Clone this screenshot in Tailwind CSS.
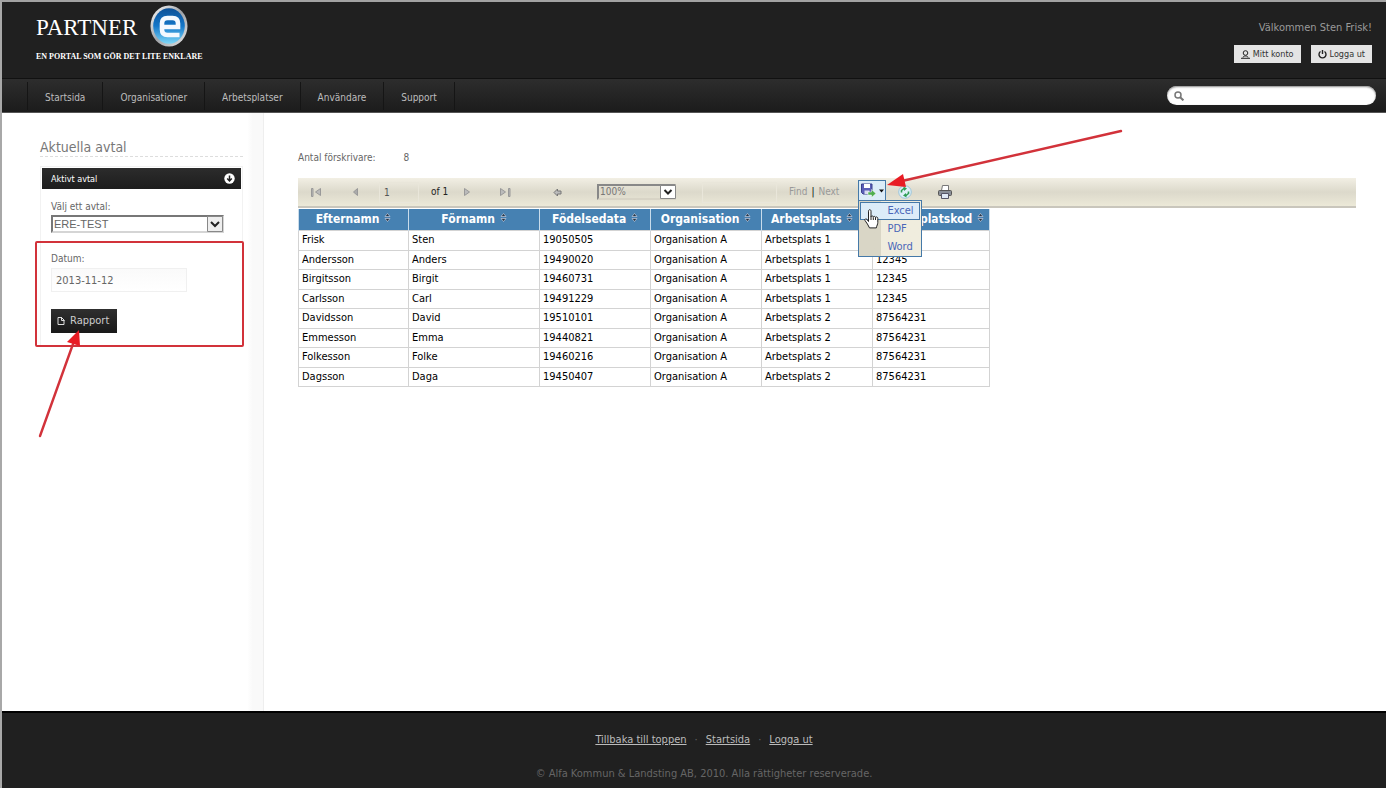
<!DOCTYPE html>
<html lang="sv">
<head>
<meta charset="utf-8">
<meta name="viewport" content="width=device-width, initial-scale=1">
<title>Partner e</title>
<script src="https://cdn.jsdelivr.net/npm/@tailwindcss/browser@4"></script>
</head>
<body class="relative flex min-h-screen flex-col border-t-2 border-l-2 border-t-[#a2a2a2] border-l-[#a8a8a8] bg-white font-['DejaVu_Sans_Condensed','DejaVu_Sans',sans-serif] text-[11px] leading-4 text-[#666]">

<header class="flex h-[76px] justify-between bg-[#202020] pr-[14px] pl-[34px]">
  <a href="#" class="block text-white">
    <span class="flex h-[47px] items-center gap-3">
      <span class="pt-1 font-['Liberation_Serif',serif] text-[23px] leading-7">PARTNER</span>
      <svg class="h-[44px] w-[40px]" viewBox="0 0 40 44" aria-label="e">
        <defs>
          <linearGradient id="ring" x1="0" y1="0" x2="1" y2="1"><stop offset="0" stop-color="#fff"/><stop offset=".5" stop-color="#9fa3a8"/><stop offset="1" stop-color="#e8e8e8"/></linearGradient>
          <linearGradient id="ball" x1="0" y1="0" x2="0" y2="1"><stop offset="0" stop-color="#0b4f96"/><stop offset=".5" stop-color="#1477c9"/><stop offset="1" stop-color="#7fd8f8"/></linearGradient>
        </defs>
        <ellipse cx="20" cy="22" rx="18.500" ry="20.500" fill="url(#ring)"/>
        <ellipse cx="20" cy="22" rx="15.800" ry="17.800" fill="url(#ball)"/>
        <path d="M30.500 31H18.500q-5.500 0-5.500-5.500V19.500q0-5.500 5.500-5.500h5q5.500 0 5.500 5.500v3.500H13" fill="none" stroke="#f4f9ff" stroke-width="4.600"/>
      </svg>
    </span>
    <span class="block font-['Liberation_Serif',serif] text-[8px] leading-4 font-bold">EN PORTAL SOM GÖR DET LITE ENKLARE</span>
  </a>
  <div class="flex flex-col items-end pt-[18px]">
    <p class="text-[#9a9a9a]">Välkommen Sten Frisk!</p>
    <div class="mt-[9px] flex gap-[10px] text-[9px] text-[#333]">
      <button type="button" class="flex h-[18px] items-center gap-[3px] bg-[#e4e4e4] px-[7px]">
        <svg class="h-[9px] w-[9px]" viewBox="0 0 9 9" fill="none" stroke="#222"><circle cx="4.500" cy="3" r="2.300"/><path d="M0 8.300h9M2 7.500c0-2 5-2 5 0"/></svg>
        Mitt konto</button>
      <button type="button" class="flex h-[18px] items-center gap-[3px] bg-[#e4e4e4] px-[7px]">
        <svg class="h-[9px] w-[9px]" viewBox="0 0 9 9" fill="none" stroke="#222" stroke-width="1.400"><path d="M2.500 1.500a3.500 3.500 0 1 0 4 0M4.500 0v4"/></svg>
        Logga ut</button>
    </div>
  </div>
</header>

<nav class="flex h-[35px] items-center justify-between border-t border-b border-t-[#111] border-b-[#555] bg-linear-to-b from-[#2d2d2d] to-[#1c1c1c] pr-[10px] pl-[25px] text-[10px] text-[#bdbdbd]">
  <ul class="flex h-7 divide-x divide-[#151515] border-x border-[#151515] leading-8">
    <li><a href="#" class="block px-[17px]">Startsida</a></li>
    <li><a href="#" class="block px-[17px]">Organisationer</a></li>
    <li><a href="#" class="block px-[17px]">Arbetsplatser</a></li>
    <li><a href="#" class="block px-[17px]">Användare</a></li>
    <li><a href="#" class="block px-[17px]">Support</a></li>
  </ul>
  <form class="flex h-[19px] w-[209px] items-center rounded-full bg-white pl-[7px] shadow-[inset_0_1px_2px_#888]">
    <svg class="h-[10px] w-[10px]" viewBox="0 0 10 10" fill="none" stroke="#777" stroke-width="1.500"><circle cx="4" cy="4" r="3"/><path d="M6.200 6.200l3.200 3.200" stroke-width="2"/></svg>
    <input type="search" aria-label="Sök" class="min-w-0 flex-1 px-2 outline-none">
  </form>
</nav>

<main class="flex flex-1">
  <aside class="w-[262px] shrink-0 border-r border-[#eee] bg-linear-to-r from-white from-94% to-[#f9f9f9] to-96% pt-[25px] pr-5 pl-[38px]">
    <h2 class="border-b border-dashed border-[#ddd] text-[14px] leading-[18px] text-[#777]">Aktuella avtal</h2>
    <section class="mt-[9px] border border-[#f2f2f2] px-px pt-px">
      <h3 class="flex h-[21px] items-center justify-between bg-linear-to-b from-[#2c2c2c] to-[#1d1d1d] pr-[6px] pl-[9px] text-[9px] text-white">Aktivt avtal
        <svg class="h-[11px] w-[11px]" viewBox="0 0 11 11"><circle cx="5.500" cy="5.500" r="5.200" fill="#fff"/><path d="M5.500 2.500v5M3.200 5.500l2.300 2.500 2.300-2.500" fill="none" stroke="#222" stroke-width="1.500"/></svg>
      </h3>
      <div class="px-[9px] pt-[10px]">
        <label for="avtal" class="block h-4 text-[10px]">Välj ett avtal:</label>
        <div class="relative w-[173px]">
          <select id="avtal" class="block h-[18px] w-full appearance-none border-2 border-[#d5d5d5] border-t-[#777] border-l-[#777] bg-white pl-px font-['Liberation_Sans',sans-serif] text-[11px] leading-[14px] text-[#666]"><option>ERE-TEST</option></select>
          <svg class="pointer-events-none absolute top-px right-px h-4 w-4" viewBox="0 0 16 16"><path d="M.5.500h15v15H.500z" fill="#eee" stroke="#888"/><path d="M4 6l4 4 4-4" fill="none" stroke="#222" stroke-width="2"/></svg>
        </div>
      </div>
      <div class="relative px-[9px] pt-[18px] pb-3">
        <div class="pointer-events-none absolute top-2 -right-[3px] -left-[7px] h-[106px] rounded-xs border-2 border-[#d2323a]"></div>
        <label for="datum" class="block h-[17px] text-[10px]">Datum:</label>
        <input id="datum" type="text" value="2013-11-12" class="block h-6 w-[136px] border border-[#f0f0f0] bg-linear-to-b from-[#fafafa] to-white px-1">
        <button type="button" class="mt-[17px] flex h-6 items-center gap-[5px] bg-linear-to-b from-[#2f2f2f] to-[#191919] px-[6px] pr-2 text-[#ccc]">
          <svg class="h-2 w-2" viewBox="0 0 8 8" fill="none" stroke="#ddd"><path d="M1 .500h3.500l2.500 2.500v4.500h-6zM4.500 0v3.500h3"/></svg>
          Rapport</button>
      </div>
    </section>
  </aside>

  <section class="min-w-0 flex-1 pt-[37px] pr-[30px] pl-[34px]">
    <dl class="flex gap-7 text-[10px]"><dt>Antal förskrivare:</dt><dd>8</dd></dl>

    <div class="mt-3 flex h-[30px] items-center border-b-2 border-[#c9c6bc] bg-linear-to-b from-[#f2efe4] via-[#dcd9cb] to-[#ece9d8] pl-3 text-[10px] text-[#333]" role="toolbar" aria-label="Rapport">
      <button type="button" aria-label="Första sidan" class="w-10"><svg class="h-[9px] w-3" viewBox="0 0 12 9" fill="#bbb" stroke="#999"><path d="M1.500.500v8h1.500v-8zM10.500.500v7l-5-3.500z"/></svg></button>
      <button type="button" aria-label="Föregående sida" class="w-[29px]"><svg class="h-[9px] w-3" viewBox="0 0 12 9" fill="#aaa" stroke="#999"><path d="M7.500.500v7l-4-3.500z"/></svg></button>
      <input type="text" value="1" aria-label="Sida" class="h-[21px] w-10 border border-[#e9e6da] px-1 text-[#555]">
      <span class="ml-3 w-[30px] whitespace-nowrap text-[#222]">of 1</span>
      <button type="button" aria-label="Nästa sida" class="w-[38px]"><svg class="h-[9px] w-3" viewBox="0 0 12 9" fill="#bbb" stroke="#999"><path d="M3.500.500v7l5-3.500z"/></svg></button>
      <button type="button" aria-label="Sista sidan" class="w-[54px]"><svg class="h-[9px] w-3" viewBox="0 0 12 9" fill="#bbb" stroke="#999"><path d="M1.500.500v7l5-3.500zM9.500.500v8h1.500v-8z"/></svg></button>
      <button type="button" aria-label="Tillbaka" class="w-11"><svg class="h-[9px] w-[9px]" viewBox="0 0 9 9" fill="#bbb" stroke="#777"><path d="M1 4.500l3.500-3.500v2h3.500v3h-3.500v2z"/></svg></button>
      <div class="relative w-[79px]">
        <select aria-label="Zoom" class="block h-4 w-full appearance-none border-2 border-[#d8d4c6] border-t-[#888] border-l-[#888] pl-px leading-3 text-[#777]"><option>100%</option></select>
        <svg class="pointer-events-none absolute top-px right-0 h-[14px] w-4" viewBox="0 0 16 14"><path d="M.5.500h15v13H.500z" fill="#fff" stroke="#888"/><path d="M4.500 5l3.500 3.500 3.500-3.500" fill="none" stroke="#222" stroke-width="2"/></svg>
      </div>
      <input type="text" aria-label="Sök text" class="ml-[26px] h-[21px] w-[75px] border border-[#e9e6da]">
      <button type="button" class="ml-3 text-[#999]">Find</button><span class="mx-1 text-black">|</span><button type="button" class="w-[39px] text-left text-[#999]">Next</button>
      <div class="relative mt-[2px] ml-px self-start">
        <button type="button" aria-label="Exportera" aria-expanded="true" class="flex h-[21px] w-7 items-center border border-[#4579a8] bg-[#dcecf8] pl-[2px]">
          <svg class="h-4 w-6" viewBox="0 0 24 16"><path d="M.5 1h10.500v10H2l-1.500-1.500z" fill="#5b5fb8" stroke="#3b3f8c"/><path d="M3 1h6v4H3z" fill="#fff"/><path d="M3.500 7.500h5v3.500h-5z" fill="#d8dcf0"/><path d="M7 9h3.500V6.500l4.500 4-4.500 4V12H7z" fill="#4fae50" stroke="#fff" stroke-width=".500"/><path d="M18 6.500h5l-2.500 3z" fill="#111"/></svg>
        </button>
        <ul class="absolute top-[20px] left-0 z-10 w-16 border border-[#4579a8] bg-linear-to-r from-[#d9d6c6] from-35% to-[#f0edde] to-35% p-px text-[11px] text-[#4a66b8]">
          <li><a href="#" class="block h-[18px] border border-[#4579a8] bg-[#dcecf8] pl-[26px]">Excel</a></li>
          <li><a href="#" class="block h-[18px] pt-px pl-[27px]">PDF</a></li>
          <li><a href="#" class="block h-[17px] pt-px pl-[27px]">Word</a></li>
        </ul>
        <svg class="pointer-events-none absolute top-[29px] left-[6px] z-20 h-5 w-[15px]" viewBox="0 0 15 20"><path d="M4.500 12.500V2.200c0-2 2.500-2 2.500 0V8c0-1.500 2.300-1.400 2.300.3 0-1.500 2.200-1.200 2.200.4 0-1.300 2.300-1 2.300.7v4c0 2-1 3-1.500 5.500H5.500C4.500 16 2.500 14 1 11.500.3 10 2 9.300 3 10.500z" fill="#fff" stroke="#222"/><path d="M7 8v3M9.300 8.500V11M11.500 9v2" stroke="#222"/></svg>
      </div>
      <button type="button" aria-label="Uppdatera" class="ml-3"><svg class="block h-[14px] w-[14px]" viewBox="0 0 14 14"><circle cx="7" cy="7" r="6.300" fill="#dff0f8" stroke="#9cc6dc"/><path d="M3.500 7.500V5.500l3-2.500M10.500 6.500v2l-3 2.500" fill="none" stroke="#2f9e55" stroke-width="1.600"/><path d="M5.500 1.500L9 3.500 6 6zM8.500 12.500L5 10.500 8 8z" fill="#2f9e55"/></svg></button>
      <button type="button" aria-label="Skriv ut" class="ml-[26px]"><svg class="block h-[14px] w-[14px]" viewBox="0 0 14 14"><path d="M3.500 5.500L4.500.500h6v5" fill="#fff" stroke="#777"/><rect x=".5" y="5.500" width="13" height="5" rx="1" fill="#8a8f98" stroke="#555"/><path d="M3.500 8.500h7v5h-7z" fill="#dfe8f4" stroke="#556"/></svg></button>
    </div>

    <table class="mt-px w-[691px] table-fixed border-collapse text-[11px] text-black">
      <colgroup><col class="w-[110px]"><col class="w-[131px]"><col class="w-[111px]"><col class="w-[111px]"><col class="w-[111px]"><col class="w-[117px]"></colgroup>
      <thead>
        <tr class="h-[21px] bg-[#4681b2] text-[12px] whitespace-nowrap text-white [&>th]:border-x [&>th]:border-[#c9dceb]">
          <th scope="col">Efternamn <svg class="mb-1 ml-px inline h-[9px] w-[7px]" viewBox="0 0 7 9"><path d="M1 3.500l2.500-3 2.500 3zM1 5.500l2.500 3 2.500-3z" fill="#234" stroke="#dde" stroke-width=".600"/></svg></th>
          <th scope="col">Förnamn <svg class="mb-1 ml-px inline h-[9px] w-[7px]" viewBox="0 0 7 9"><path d="M1 3.500l2.500-3 2.500 3zM1 5.500l2.500 3 2.500-3z" fill="#234" stroke="#dde" stroke-width=".600"/></svg></th>
          <th scope="col">Födelsedata <svg class="mb-1 ml-px inline h-[9px] w-[7px]" viewBox="0 0 7 9"><path d="M1 3.500l2.500-3 2.500 3zM1 5.500l2.500 3 2.500-3z" fill="#234" stroke="#dde" stroke-width=".600"/></svg></th>
          <th scope="col">Organisation <svg class="mb-1 ml-px inline h-[9px] w-[7px]" viewBox="0 0 7 9"><path d="M1 3.500l2.500-3 2.500 3zM1 5.500l2.500 3 2.500-3z" fill="#234" stroke="#dde" stroke-width=".600"/></svg></th>
          <th scope="col" class="pr-3 pl-[9px] text-left">Arbetsplats <svg class="mb-1 ml-px inline h-[9px] w-[7px]" viewBox="0 0 7 9"><path d="M1 3.500l2.500-3 2.500 3zM1 5.500l2.500 3 2.500-3z" fill="#234" stroke="#dde" stroke-width=".600"/></svg></th>
          <th scope="col" class="pr-[5px] text-right">Arbetsplatskod <svg class="mb-1 ml-px inline h-[9px] w-[7px]" viewBox="0 0 7 9"><path d="M1 3.500l2.500-3 2.500 3zM1 5.500l2.500 3 2.500-3z" fill="#234" stroke="#dde" stroke-width=".600"/></svg></th>
        </tr>
      </thead>
      <tbody class="[&_td]:border [&_td]:border-[#d3d3d3] [&_td]:px-[3px] [&_tr]:odd:h-5 [&_tr]:even:h-[19px]">
        <tr><td>Frisk</td><td>Sten</td><td>19050505</td><td>Organisation A</td><td>Arbetsplats 1</td><td>12345</td></tr>
        <tr><td>Andersson</td><td>Anders</td><td>19490020</td><td>Organisation A</td><td>Arbetsplats 1</td><td>12345</td></tr>
        <tr><td>Birgitsson</td><td>Birgit</td><td>19460731</td><td>Organisation A</td><td>Arbetsplats 1</td><td>12345</td></tr>
        <tr><td>Carlsson</td><td>Carl</td><td>19491229</td><td>Organisation A</td><td>Arbetsplats 1</td><td>12345</td></tr>
        <tr><td>Davidsson</td><td>David</td><td>19510101</td><td>Organisation A</td><td>Arbetsplats 2</td><td>87564231</td></tr>
        <tr><td>Emmesson</td><td>Emma</td><td>19440821</td><td>Organisation A</td><td>Arbetsplats 2</td><td>87564231</td></tr>
        <tr><td>Folkesson</td><td>Folke</td><td>19460216</td><td>Organisation A</td><td>Arbetsplats 2</td><td>87564231</td></tr>
        <tr><td>Dagsson</td><td>Daga</td><td>19450407</td><td>Organisation A</td><td>Arbetsplats 2</td><td>87564231</td></tr>
      </tbody>
    </table>
  </section>
</main>

<footer class="flex h-[77px] flex-col items-center border-t-2 border-black bg-[#202020] pt-[19px] pl-5 text-[11px] text-[#666]">
  <p class="flex items-center gap-2"><a href="#" class="text-[#bbb] underline">Tillbaka till toppen</a><span>·</span><a href="#" class="text-[#bbb] underline">Startsida</a><span>·</span><a href="#" class="text-[#bbb] underline">Logga ut</a></p>
  <p class="mt-[18px]">© Alfa Kommun &amp; Landsting AB, 2010. Alla rättigheter reserverade.</p>
</footer>

<!-- Annotation arrows -->
<svg class="pointer-events-none absolute top-[120px] left-[880px] z-30 h-20 w-[250px]" viewBox="0 0 250 80"><path d="M239 9L20 59" stroke="#d2323a" stroke-width="2.400" stroke-linecap="round"/><path d="M5 63l16-11 3 13z" fill="#e81c24"/></svg>
<svg class="pointer-events-none absolute top-[325px] left-[30px] z-30 h-[120px] w-[60px]" viewBox="0 0 60 120"><path d="M8 109L41 17" stroke="#d2323a" stroke-width="2.400" stroke-linecap="round"/><path d="M47 3L35 15l13 4z" fill="#e81c24"/></svg>
</body>
</html>
